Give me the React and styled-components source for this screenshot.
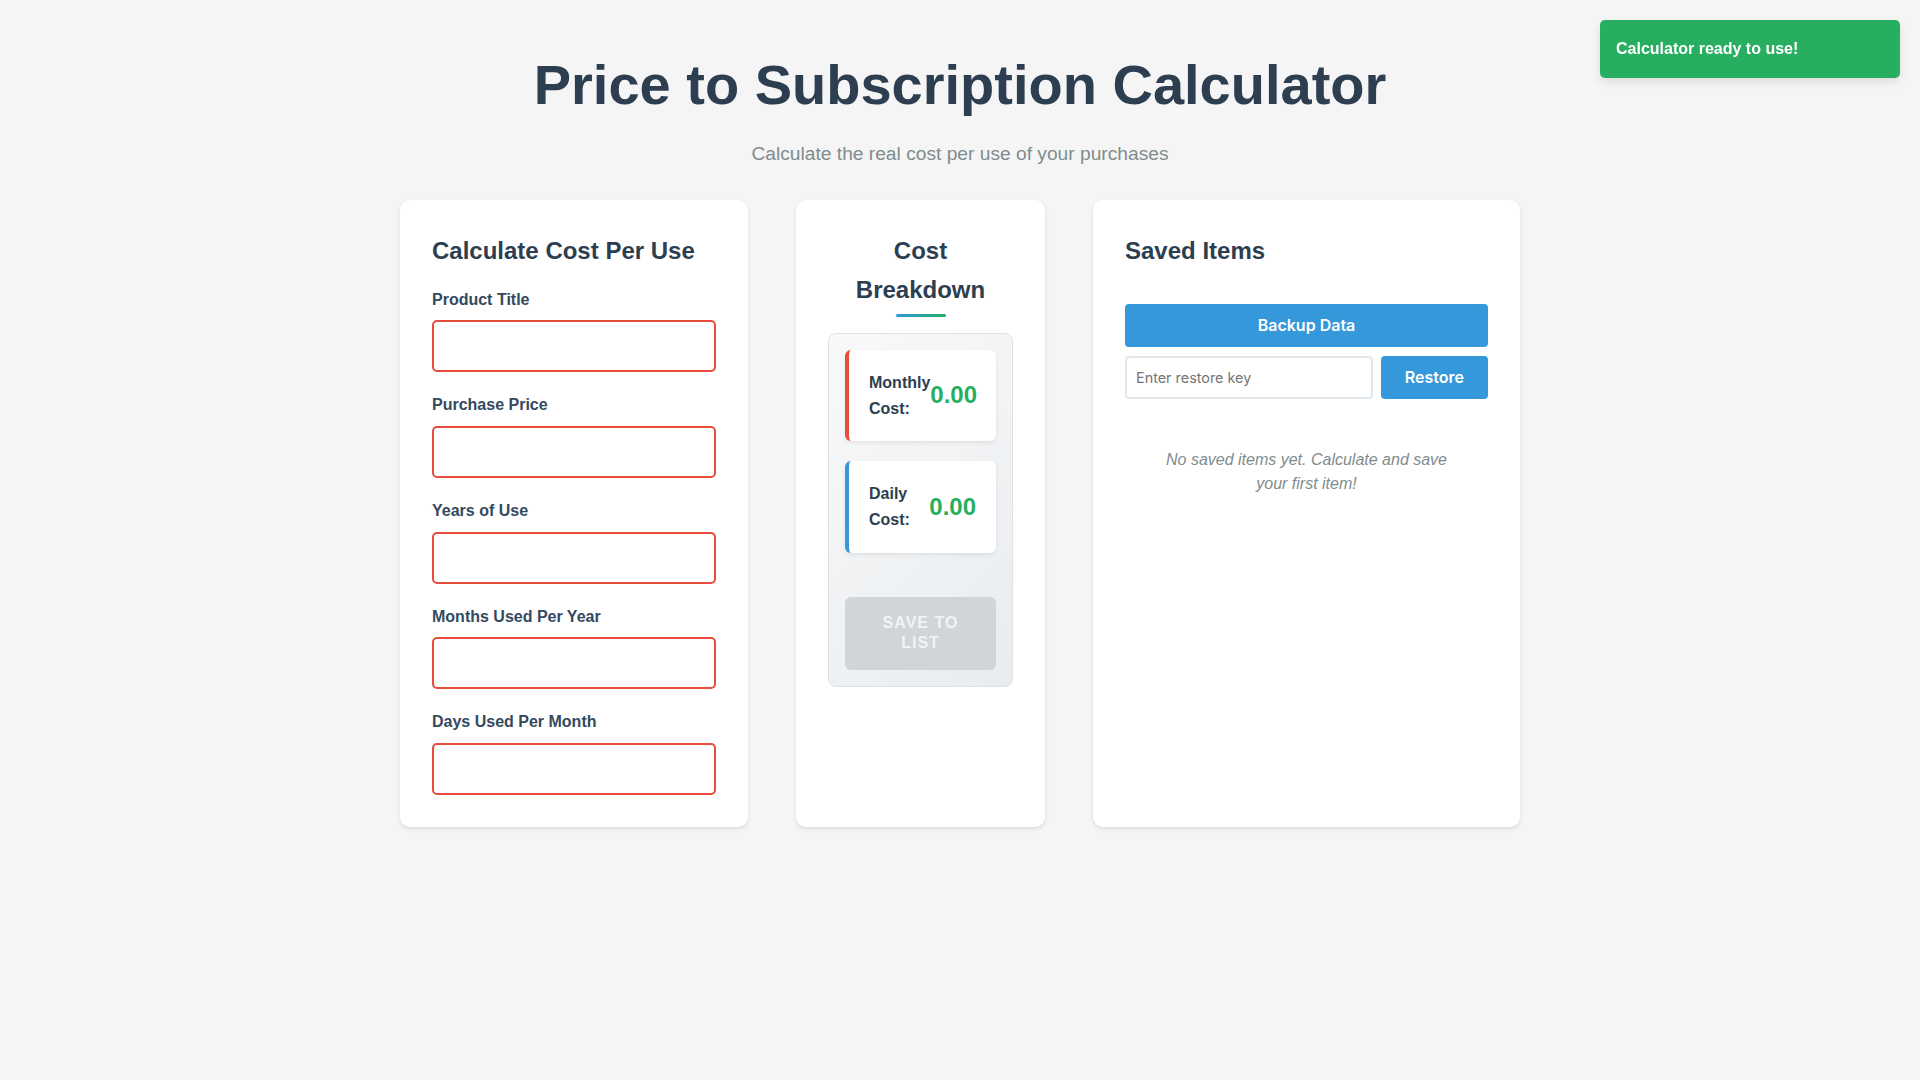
import styled, { createGlobalStyle } from 'styled-components'

const GlobalStyle = createGlobalStyle`
  * { box-sizing: border-box; }
  body {
    margin: 0;
    background: #f5f5f5;
    font-family: "Liberation Sans", Arial, sans-serif;
    line-height: 1.6;
    color: #2c3e50;
  }
`

const Page = styled.div`
  min-height: 100vh;
  padding: 32px 0;
`

const Header = styled.header`
  text-align: center;
  margin-bottom: 31px;

  h1 {
    margin: 19px 0 20.5px;
    font-size: 56px;
    line-height: 1.2;
    color: #2c3e50;
  }

  p {
    margin: 0;
    font-size: 19.2px;
    color: #7f8c8d;
  }
`

const Grid = styled.main`
  display: grid;
  grid-template-columns: 348px 249px 427px;
  gap: 48px;
  justify-content: center;
  align-items: stretch;
`

const Card = styled.section`
  background: #fff;
  border-radius: 10px;
  padding: 32px;
  box-shadow: 0 2px 4px rgba(0, 0, 0, 0.1);
  text-align: ${(p) => (p.$center ? 'center' : 'left')};
`

const CardTitle = styled.h2`
  margin: 0 0 16px;
  font-size: 24px;
  line-height: 1.6;
  color: #2c3e50;
`

const Field = styled.div`
  margin-bottom: 20px;

  &:last-child {
    margin-bottom: 0;
  }
`

const Label = styled.label`
  display: block;
  margin-bottom: 8px;
  font-size: 16px;
  font-weight: bold;
  color: #34495e;
`

const Input = styled.input`
  display: block;
  width: 100%;
  height: 52px;
  padding: 0 12px;
  border: 2px solid #e74c3c;
  border-radius: 5px;
  background: #fff;
  font-family: "Liberation Sans", Arial, sans-serif;
  font-size: 16px;
  outline: none;
`

const Underline = styled.div`
  width: 50px;
  height: 3px;
  margin: -11px auto 16px;
  border-radius: 2px;
  background: linear-gradient(90deg, #3498db, #27ae60);
`

const ResultBox = styled.div`
  padding: 16px;
  border: 1px solid #dee2e6;
  border-radius: 8px;
  background: linear-gradient(135deg, #f8f9fa, #e9ecef);
  text-align: left;
`

const ResultItem = styled.div`
  display: flex;
  justify-content: space-between;
  align-items: center;
  margin-bottom: 20px;
  padding: 20px;
  border-left: 4px solid ${(p) => p.$accent};
  border-radius: 6px;
  background: #fff;
  box-shadow: 0 2px 4px rgba(0, 0, 0, 0.08);
`

const ResultLabel = styled.span`
  font-size: 16px;
  font-weight: bold;
  color: #2c3e50;
`

const ResultValue = styled.span`
  font-size: 24px;
  font-weight: bold;
  line-height: 1.2;
  color: #27ae60;
`

const SaveButton = styled.button`
  display: block;
  width: 100%;
  margin-top: 44px;
  padding: 16px 24px;
  border: none;
  border-radius: 6px;
  background: #d1d5d9;
  color: #f1f3f5;
  font-family: "Liberation Sans", Arial, sans-serif;
  font-size: 16px;
  font-weight: bold;
  line-height: 1.3;
  letter-spacing: 1px;
  text-transform: uppercase;
  cursor: not-allowed;
`

const Backup = styled.div`
  margin-top: 33px;
`

const BlueButton = styled.button`
  display: block;
  width: ${(p) => (p.$full ? '100%' : 'auto')};
  flex-shrink: 0;
  padding: 12px 24px;
  border: none;
  border-radius: 4px;
  background: #3498db;
  color: #fff;
  font-family: Inter, "Noto Sans", sans-serif;
  font-size: 16px;
  font-weight: 600;
  line-height: 19.5px;
  cursor: pointer;
`

const RestoreRow = styled.div`
  display: flex;
  gap: 8px;
  margin-top: 8.5px;
`

const RestoreInput = styled.input`
  flex: 1;
  min-width: 0;
  padding: 0 9px;
  border: 2px solid #e1e8ed;
  border-radius: 4px;
  font-family: Inter, "Noto Sans", sans-serif;
  font-size: 14.4px;
  outline: none;

  &::placeholder {
    color: #757575;
  }
`

const Empty = styled.p`
  margin: 17px 0 0;
  padding: 32px;
  text-align: center;
  font-size: 16px;
  font-style: italic;
  line-height: 1.5;
  color: #7f8c8d;
`

const Toast = styled.div`
  position: fixed;
  top: 20px;
  right: 20px;
  width: 300px;
  padding: 16px;
  border-radius: 5px;
  background: #27ae60;
  color: #fff;
  font-size: 16px;
  font-weight: bold;
  box-shadow: 0 4px 8px rgba(0, 0, 0, 0.1);
`

const fields = [
  'Product Title',
  'Purchase Price',
  'Years of Use',
  'Months Used Per Year',
  'Days Used Per Month',
]

const App = () => {
  return (
    <>
      <GlobalStyle />
      <Page>
        <Header>
          <h1>Price to Subscription Calculator</h1>
          <p>Calculate the real cost per use of your purchases</p>
        </Header>

        <Grid>
          <Card>
            <CardTitle>Calculate Cost Per Use</CardTitle>
            {fields.map((f) => (
              <Field key={f}>
                <Label>{f}</Label>
                <Input type="text" />
              </Field>
            ))}
          </Card>

          <Card $center>
            <CardTitle>Cost Breakdown</CardTitle>
            <Underline />
            <ResultBox>
              <ResultItem $accent="#e74c3c">
                <ResultLabel>Monthly Cost:</ResultLabel>
                <ResultValue>0.00</ResultValue>
              </ResultItem>
              <ResultItem $accent="#3498db">
                <ResultLabel>Daily Cost:</ResultLabel>
                <ResultValue>0.00</ResultValue>
              </ResultItem>
              <SaveButton disabled>Save to list</SaveButton>
            </ResultBox>
          </Card>

          <Card>
            <CardTitle>Saved Items</CardTitle>
            <Backup>
              <BlueButton $full>Backup Data</BlueButton>
              <RestoreRow>
                <RestoreInput placeholder="Enter restore key" />
                <BlueButton>Restore</BlueButton>
              </RestoreRow>
            </Backup>
            <Empty>No saved items yet. Calculate and save your first item!</Empty>
          </Card>
        </Grid>
      </Page>
      <Toast>Calculator ready to use!</Toast>
    </>
  )
}

export default App
